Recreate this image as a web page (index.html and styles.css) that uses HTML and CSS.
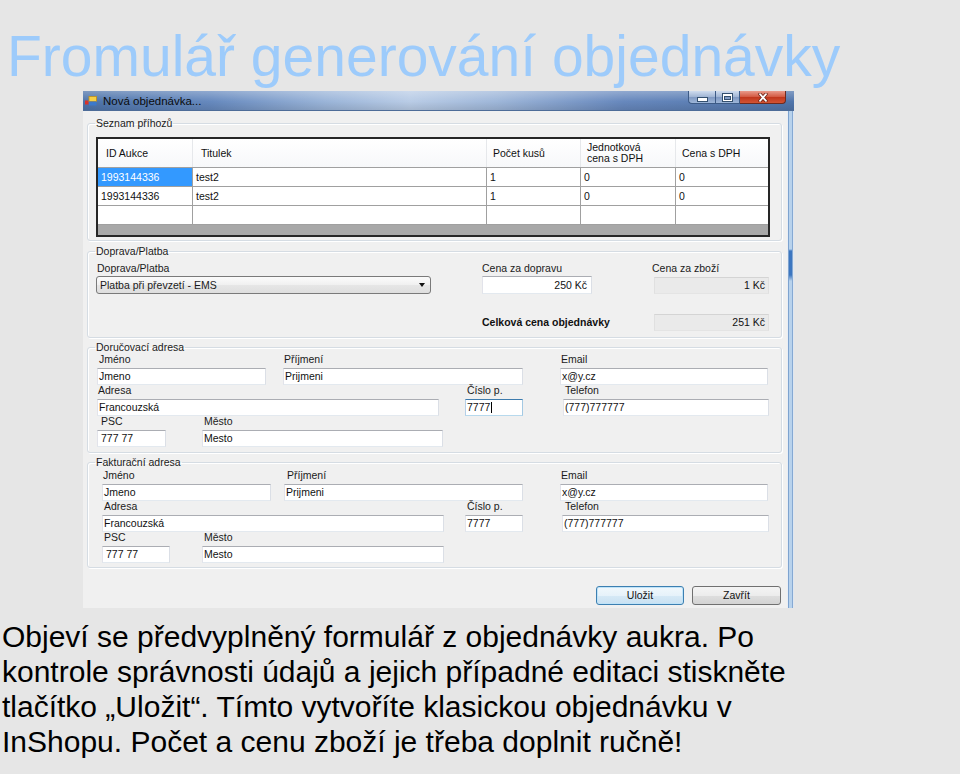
FILE: index.html
```html
<!DOCTYPE html>
<html lang="cs">
<head>
<meta charset="utf-8">
<title>Fromulář generování objednávky</title>
<link rel="stylesheet" href="styles.css">
</head>
<body>
<h1 class="title">Fromulář generování objednávky</h1>
<div class="window">
  <div class="titlebar">
    <svg class="app-icon" width="12" height="10" viewBox="0 0 12 10">
      <rect x="0" y="4.5" width="3.5" height="4" fill="#d8322a"/>
      <rect x="4" y="0.5" width="7.5" height="5" fill="#f6cf45" stroke="#c09018" stroke-width="0.8"/>
      <rect x="4" y="5.5" width="7.5" height="4" fill="#3b79cc"/>
    </svg>
    <span class="win-title">Nová objednávka...</span>
    <div class="caption">
      <span class="cbtn cbtn-min"><span class="glyph-min"></span></span>
      <span class="cbtn cbtn-max"><span class="glyph-max"></span></span>
      <span class="cbtn cbtn-close">
        <svg width="12" height="9" viewBox="0 0 12 9">
          <path d="M3 1.2 L9 7.8 M9 1.2 L3 7.8" stroke="#6d2418" stroke-width="3.4" stroke-linecap="round"/>
          <path d="M3 1.2 L9 7.8 M9 1.2 L3 7.8" stroke="#ffffff" stroke-width="1.8" stroke-linecap="round"/>
        </svg>
      </span>
    </div>
  </div>
  <div class="win-main">
    <div class="client">
      <fieldset class="group group-bids">
        <legend>Seznam příhozů</legend>
        <div class="grid">
          <div class="grow ghead">
            <div class="gc gh1">ID Aukce</div>
            <div class="gc gh1">Titulek</div>
            <div class="gc">Počet kusů</div>
            <div class="gc gtwo">Jednotková<br>cena s DPH</div>
            <div class="gc">Cena s DPH</div>
          </div>
          <div class="grow">
            <div class="gc gsel">1993144336</div>
            <div class="gc">test2</div>
            <div class="gc">1</div>
            <div class="gc">0</div>
            <div class="gc">0</div>
          </div>
          <div class="grow">
            <div class="gc">1993144336</div>
            <div class="gc">test2</div>
            <div class="gc">1</div>
            <div class="gc">0</div>
            <div class="gc">0</div>
          </div>
          <div class="grow">
            <div class="gc"></div>
            <div class="gc"></div>
            <div class="gc"></div>
            <div class="gc"></div>
            <div class="gc"></div>
          </div>
          <div class="grid-fill"></div>
        </div>
      </fieldset>

      <fieldset class="group group-pay">
        <legend>Doprava/Platba</legend>
        <div class="pay">
          <div class="plbl pl-first">Doprava/Platba</div>
          <div class="plbl pc3">Cena za dopravu</div>
          <div class="plbl pc5">Cena za zboží</div>
          <div class="combo">Platba při převzetí - EMS<span class="combo-arrow"></span></div>
          <div class="tb tb-num pc3">250 Kč</div>
          <div class="tb tb-ro tb-num pc5 pro">1 Kč</div>
          <div class="plbl plbl-bold pc3 prow3">Celková cena objednávky</div>
          <div class="tb tb-ro tb-num pc5 pro prow3">251 Kč</div>
        </div>
      </fieldset>

      <fieldset class="group group-addr group-ship">
        <legend>Doručovací adresa</legend>
        <div class="frow">
          <div class="field f-jmeno"><div class="lbl">Jméno</div><div class="tb">Jmeno</div></div>
          <div class="field f-prijmeni"><div class="lbl">Příjmení</div><div class="tb">Prijmeni</div></div>
          <div class="field f-email"><div class="lbl">Email</div><div class="tb">x@y.cz</div></div>
        </div>
        <div class="frow">
          <div class="field f-adresa"><div class="lbl">Adresa</div><div class="tb">Francouzská</div></div>
          <div class="field f-cislo"><div class="lbl">Číslo p.</div><div class="tb tb-focus">7777<span class="caret"></span></div></div>
          <div class="field f-telefon"><div class="lbl">Telefon</div><div class="tb">(777)777777</div></div>
        </div>
        <div class="frow">
          <div class="field f-psc"><div class="lbl">PSC</div><div class="tb tb-psc">777 77</div></div>
          <div class="field f-mesto"><div class="lbl">Město</div><div class="tb">Mesto</div></div>
        </div>
      </fieldset>

      <fieldset class="group group-addr group-bill">
        <legend>Fakturační adresa</legend>
        <div class="frow">
          <div class="field f-jmeno"><div class="lbl">Jméno</div><div class="tb">Jmeno</div></div>
          <div class="field f-prijmeni"><div class="lbl">Příjmení</div><div class="tb">Prijmeni</div></div>
          <div class="field f-email"><div class="lbl">Email</div><div class="tb">x@y.cz</div></div>
        </div>
        <div class="frow">
          <div class="field f-adresa"><div class="lbl">Adresa</div><div class="tb">Francouzská</div></div>
          <div class="field f-cislo"><div class="lbl">Číslo p.</div><div class="tb">7777</div></div>
          <div class="field f-telefon"><div class="lbl">Telefon</div><div class="tb">(777)777777</div></div>
        </div>
        <div class="frow">
          <div class="field f-psc"><div class="lbl">PSC</div><div class="tb tb-psc">777 77</div></div>
          <div class="field f-mesto"><div class="lbl">Město</div><div class="tb">Mesto</div></div>
        </div>
      </fieldset>

      <div class="actions">
        <div class="btn btn-save">Uložit</div>
        <div class="btn btn-close">Zavřít</div>
      </div>
    </div>
    <div class="frame-r"></div>
  </div>
</div>
<p class="desc">Objeví se předvyplněný formulář z objednávky aukra. Po<br>kontrole správnosti údajů a jejich případné editaci stiskněte<br>tlačítko „Uložit“. Tímto vytvoříte klasickou objednávku v<br>InShopu. Počet a cenu zboží je třeba doplnit ručně!</p>
</body>
</html>
```

FILE: styles.css
```css
* { box-sizing: border-box; }
html, body { margin: 0; padding: 0; }
body {
  background: #e6e6e6;
  font-family: "Liberation Sans", Arial, sans-serif;
  width: 960px;
  height: 774px;
  overflow: hidden;
}

.title {
  margin: 0;
  height: 91px;
  padding: 23px 0 0 7px;
  font-weight: normal;
  font-size: 57px;
  line-height: 66px;
  color: #9dcbfb;
  white-space: nowrap;
}

/* ---------- window ---------- */
.window {
  margin-left: 83px;
  width: 711px;
  height: 517px;
  display: flex;
  flex-direction: column;
}
.titlebar {
  height: 20px;
  flex: none;
  display: flex;
  align-items: center;
  background:
    linear-gradient(to bottom, rgba(255,255,255,.28), rgba(255,255,255,0) 55%, rgba(0,0,0,.10)),
    linear-gradient(90deg, #4d73a9 0%, #6689be 18%, #9ab4d8 34%, #b9cce6 46%, #9fb7d9 58%, #6788bd 76%, #5075ab 100%);
  border-bottom: 1px solid #4d6c98;
}
.app-icon { margin-left: 2px; flex: none; }
.win-title {
  margin-left: 6px;
  font-size: 11.5px;
  color: #0b0b0b;
  white-space: nowrap;
}
.caption {
  margin-left: auto;
  margin-right: 8px;
  align-self: flex-start;
  display: flex;
  height: 13px;
}
.cbtn {
  height: 13px;
  display: flex;
  align-items: center;
  justify-content: center;
  border: 1px solid #3d5b86;
  border-top: none;
}
.cbtn-min {
  width: 27px;
  border-right: none;
  border-bottom-left-radius: 4px;
  background: linear-gradient(#cfdcee, #9fb4d3 50%, #8099c2 51%, #9db6d9);
}
.cbtn-max {
  width: 25px;
  background: linear-gradient(#cfdcee, #9fb4d3 50%, #8099c2 51%, #9db6d9);
}
.cbtn-close {
  width: 46px;
  border-left: none;
  border-color: #6e2a1f;
  border-bottom-right-radius: 4px;
  background: linear-gradient(#e99a8a, #d35a42 48%, #c0361c 52%, #d25435);
}
.glyph-min {
  width: 9px;
  height: 3px;
  margin-top: 5px;
  background: #fff;
  box-shadow: 0 0 0 1px #34506f;
}
.glyph-max {
  width: 9px;
  height: 7px;
  border: 1px solid #fff;
  border-top-width: 2px;
  box-shadow: 0 0 0 1px #34506f, inset 0 0 0 1px #34506f;
}

.win-main {
  flex: 1;
  display: flex;
}
.client {
  width: 704px;
  background: #f0f0f0;
  padding: 6px 0 0 4px;
  display: flex;
  flex-direction: column;
}
.frame-r {
  width: 7px;
  background:
    linear-gradient(to bottom, rgba(40,100,180,0) 138px, #3c76c0 140px, #3c76c0 164px, rgba(40,100,180,0) 170px) 2px 0 / 3px 100% no-repeat,
    linear-gradient(90deg, #e9eef5 0 1px, #7ea3cf 1px 2px, #b8d2ec 2px 5px, #86a9d3 5px 6px, #dfe7f1 6px);
}

/* ---------- group boxes ---------- */
.group {
  margin: 0;
  width: 695px;
  min-width: 0;
  border: 1px solid #d5dce3;
  border-radius: 3px;
  padding: 7px 8px 3px 8px;
  box-shadow: inset 1px 1px 0 #ffffff, 1px 1px 0 #ffffff;
}
.group legend {
  margin-left: -1px;
  padding: 0 1px;
  font-size: 10.5px;
  line-height: 13px;
  color: #1b1b1b;
}
.group-pay { margin-top: 4px; padding: 4px 8px 6px 8px; }
.group-ship { margin-top: 3px; padding: 0 8px 5px 8px; }
.group-bill { margin-top: 3px; padding: 1px 8px 4px 8px; }

/* ---------- data grid ---------- */
.grid {
  width: 674px;
  border: 2px solid #262626;
  background: #fff;
  font-size: 10.5px;
  color: #111;
}
.grow {
  display: grid;
  grid-template-columns: 95px 294px 94px 95px 92px;
  height: 19px;
  border-bottom: 1px solid #a0a0a0;
}
.gc {
  border-right: 1px solid #a0a0a0;
  padding-left: 3px;
  line-height: 18px;
  white-space: nowrap;
  overflow: hidden;
}
.gc:last-child { border-right: none; }
.ghead {
  height: 29px;
  background: linear-gradient(#ffffff, #f7f8fa);
}
.ghead .gc {
  border-right-color: #e6e8eb;
  padding-left: 6px;
  line-height: 28px;
}
.ghead .gh1 { padding-left: 8px; }
.ghead .gtwo {
  line-height: 11px;
  padding-top: 3px;
}
.gsel { background: #3399ff; color: #fff; }
.grid-fill { height: 10px; background: #a8a8a8; }

/* ---------- payment ---------- */
.pay {
  display: grid;
  grid-template-columns: 335px 51px 110px 60px 117px;
  grid-template-rows: 12px 18px auto;
  row-gap: 2px;
  font-size: 10.5px;
  color: #1b1b1b;
}
.plbl { line-height: 12px; white-space: nowrap; }
.pl-first { grid-column: 1; padding-left: 1px; }
.pc3 { grid-column: 3; }
.pc5 { grid-column: 5; }
.plbl-bold { font-weight: bold; grid-column: 3 / 5; line-height: 17px; color: #111; }
.pro { margin-left: 2px; height: 17px; align-self: center; }
.prow3 { grid-row: 3; margin-top: 18px; }
.combo {
  grid-column: 1;
  grid-row: 2;
  height: 18px;
  border: 1px solid #7a7a7a;
  border-radius: 3px;
  background: linear-gradient(#fbfbfb, #f0f0f0 50%, #e6e6e6 51%, #dedede);
  padding-left: 3px;
  line-height: 16px;
  display: flex;
  align-items: center;
  justify-content: space-between;
  white-space: nowrap;
}
.combo-arrow {
  width: 0;
  height: 0;
  margin-right: 5px;
  border-left: 3.5px solid transparent;
  border-right: 3.5px solid transparent;
  border-top: 4px solid #111;
}

/* ---------- text boxes ---------- */
.tb {
  height: 17px;
  background: #fff;
  border: 1px solid;
  border-color: #abadb3 #dbdfe6 #e3e9ef #e2e3ea;
  font-size: 10.5px;
  line-height: 15px;
  padding-left: 1px;
  color: #111;
  white-space: nowrap;
}
.pay .tb { height: 18px; line-height: 16px; }
.pay .pro { height: 17px; line-height: 15px; }
.tb-num { text-align: right; padding-right: 4px; }
.tb-ro {
  background: #eaeaea;
  border-color: #d4d4d4 #e0e0e0 #e4e4e4 #e0e0e0;
  padding-right: 3px;
}
.tb-psc { padding-left: 3px; }
.tb-focus { border-color: #3d7bad #a4c9e3 #b7d9ed #b5cfe7; }
.caret {
  display: inline-block;
  width: 1px;
  height: 11px;
  margin-left: 1px;
  vertical-align: -2px;
  background: #000;
}

/* ---------- address rows ---------- */
.frow { display: flex; }
.field {
  display: flex;
  flex-direction: column;
  flex: none;
}
.lbl {
  height: 10px;
  line-height: 10px;
  font-size: 10.5px;
  color: #1b1b1b;
  white-space: nowrap;
  padding-left: var(--lp, 2px);
}
.field .tb { margin-top: 4px; }

.group-ship .f-jmeno    { margin-left: 1px;  width: 169px; --lp: 2px; }
.group-ship .f-prijmeni { margin-left: 17px; width: 240px; --lp: 1px; }
.group-ship .f-email    { margin-left: 37px; width: 208px; --lp: 1px; }
.group-ship .f-adresa   { margin-left: 1px;  width: 342px; --lp: 1px; }
.group-ship .f-cislo    { margin-left: 26px; width: 58px;  --lp: 2px; }
.group-ship .f-telefon  { margin-left: 40px; width: 206px; --lp: 2px; }
.group-ship .f-psc      { margin-left: 1px;  width: 69px;  --lp: 4px; }
.group-ship .f-mesto    { margin-left: 36px; width: 241px; --lp: 2px; }

.group-bill .f-jmeno    { margin-left: 6px;  width: 169px; --lp: 1px; }
.group-bill .f-prijmeni { margin-left: 13px; width: 239px; --lp: 3px; }
.group-bill .f-email    { margin-left: 37px; width: 208px; --lp: 1px; }
.group-bill .f-adresa   { margin-left: 6px;  width: 342px; --lp: 2px; }
.group-bill .f-cislo    { margin-left: 21px; width: 58px;  --lp: 2px; }
.group-bill .f-telefon  { margin-left: 39px; width: 207px; --lp: 3px; }
.group-bill .f-psc      { margin-left: 6px;  width: 68px;  --lp: 2px; }
.group-bill .f-mesto    { margin-left: 32px; width: 242px; --lp: 2px; }

/* ---------- buttons ---------- */
.actions {
  display: flex;
  justify-content: flex-end;
  gap: 8px;
  margin-top: 18px;
  padding-right: 6px;
}
.btn {
  height: 19px;
  border: 1px solid #707070;
  border-radius: 3px;
  font-size: 10.5px;
  line-height: 17px;
  text-align: center;
  color: #111;
  background: linear-gradient(#f4f4f4 0%, #ececec 50%, #dedede 51%, #d3d3d3 100%);
}
.btn-save {
  width: 88px;
  border-color: #3c7fb1;
  box-shadow: inset 0 0 0 1px #bfe3f8;
  background: linear-gradient(#f1f8fc 0%, #e6f2fa 50%, #d6e9f6 51%, #c9e1f2 100%);
}
.btn-close { width: 89px; }

/* ---------- description ---------- */
.desc {
  margin: 11px 0 0;
  padding-left: 2px;
  font-size: 30px;
  line-height: 35px;
  color: #000;
  white-space: nowrap;
}
```
